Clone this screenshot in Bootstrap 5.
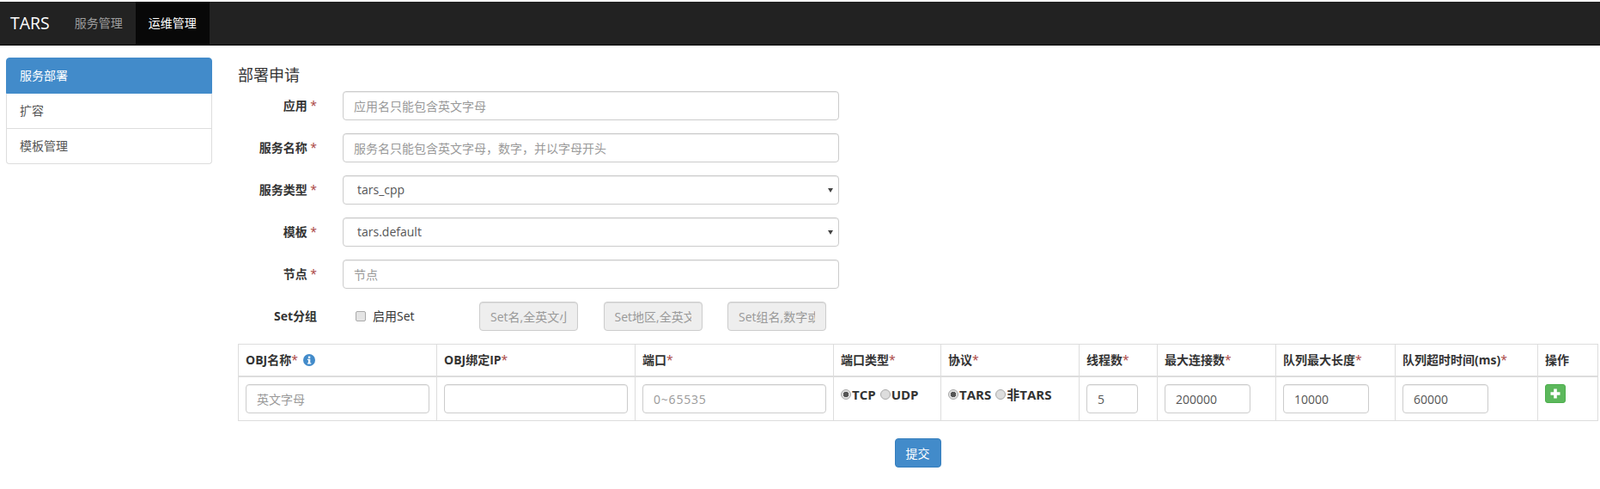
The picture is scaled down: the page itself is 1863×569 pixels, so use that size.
<!DOCTYPE html>
<html lang="zh-CN">
<head>
  <meta charset="UTF-8">
  <meta name="viewport" content="width=device-width, initial-scale=1.0">
  <title>TARS - 部署申请</title>
  <link href="https://cdn.jsdelivr.net/npm/bootstrap@5.3.0/dist/css/bootstrap.min.css" rel="stylesheet">
  <style>
    body {
      padding-top: 2px;
      font-family: "Open Sans", "Noto Sans CJK SC", sans-serif;
      font-size: 14px;
      line-height: 20px;
      color: #333;
    }
    .tars-nav {
      height: 51px;
      padding: 0;
      background: #222;
      border-bottom: 1px solid #080808;
    }
    .tars-nav .navbar-brand {
      margin: 0 14px 0 12px;
      padding: 0;
      font-size: 19.5px;
      line-height: 50px;
      color: #fff;
    }
    .tars-nav.navbar-expand .navbar-nav .nav-link {
      padding: 0 15px;
      line-height: 50px;
      color: #9d9d9d;
    }
    .tars-nav.navbar-expand .navbar-nav .nav-link.active {
      background: #080808;
      color: #fff;
    }
    .side-menu {
      flex: 0 0 240px;
      margin: 14px 0 0 7px;
      align-self: flex-start;
      border-radius: 4px;
    }
    .side-menu .list-group-item {
      padding: 10px 15px;
      font-size: 14px;
      line-height: 20px;
      color: #555;
      border-color: #ddd;
    }
    .side-menu .list-group-item.active {
      background: #428bca;
      border-color: #428bca;
      color: #fff;
    }
    .main-area {
      width: 1583px;
      margin-left: 30px;
      padding-top: 24px;
    }
    .apply-title {
      margin: 0 0 9px;
      font-size: 18px;
      line-height: 20px;
      font-weight: 400;
    }
    .deploy-row {
      display: flex;
      align-items: center;
      margin-bottom: 15px;
    }
    .deploy-label {
      flex: 0 0 92px;
      margin: 0 30px 0 0;
      text-align: right;
      font-weight: 700;
    }
    .req {
      color: #a94442;
      font-weight: 400;
    }
    .field-w {
      width: 578px;
    }
    .form-control,
    .form-select {
      height: 34px;
      padding: 6px 12px;
      font-size: 14px;
      line-height: 20px;
      color: #555;
      border-color: #ccc;
      border-radius: 4px;
      box-shadow: inset 0 1px 1px rgba(0, 0, 0, .075);
    }
    .form-control::placeholder {
      color: #999;
    }
    .form-control:disabled {
      background: #eee;
      opacity: 1;
    }
    .port-input::placeholder {
      letter-spacing: .8px;
    }
    .form-select {
      padding-left: 16px;
      background-image: url("data:image/svg+xml,%3Csvg xmlns='http://www.w3.org/2000/svg' viewBox='0 0 6 6'%3E%3Cpath fill='%23444' d='M0 1h6L3 6z'/%3E%3C/svg%3E");
      background-position: right 6px center;
      background-size: 6px 6px;
    }
    .set-check {
      display: flex;
      align-items: center;
      flex: 0 0 159px;
      padding-left: 15px;
      margin: 0;
    }
    .set-check .form-check-input {
      width: 12px;
      height: 12px;
      margin: 0 8px 0 0;
      background-color: #e4e4e4;
      border-color: #aaa;
      border-radius: 2px;
      float: none;
    }
    .set-input {
      flex: 0 0 115px;
      width: 115px;
      margin-right: 29.5px;
    }
    .obj-table {
      width: 1583px;
      margin: 0 0 20px;
      table-layout: fixed;
      color: #333;
      --bs-table-color: #333;
      --bs-border-color: #ddd;
      --bs-table-border-color: #ddd;
    }
    .obj-table th,
    .obj-table td {
      padding: 8px;
      line-height: 20px;
      vertical-align: top;
      border: 1px solid #ddd;
    }
    .obj-table thead th {
      border-bottom: 2px solid #ddd;
    }
    .obj-table th:nth-child(1),
    .obj-table th:nth-child(2),
    .obj-table th:nth-child(3) { width: 231px; }
    .obj-table th:nth-child(4) { width: 125px; }
    .obj-table th:nth-child(5) { width: 161px; }
    .obj-table th:nth-child(6) { width: 91px; }
    .obj-table th:nth-child(7) { width: 138px; }
    .obj-table th:nth-child(8) { width: 139px; }
    .obj-table th:nth-child(9) { width: 166px; }
    .obj-table th:nth-child(10) { width: 70px; }
    .w-60 { width: 60px; }
    .w-100px { width: 100px; }
    .info-mark {
      display: inline-block;
      width: 14px;
      height: 14px;
      margin-left: 2px;
      vertical-align: -2px;
    }
    .radio-line {
      display: flex;
      align-items: center;
      height: 20px;
      margin-top: 2px;
      font-size: 15px;
      font-weight: 700;
      white-space: nowrap;
    }
    .radio-dot {
      flex: 0 0 12px;
      width: 12px;
      height: 12px;
      margin-right: 1px;
      background: #ddd;
      border: 1px solid #aaa;
      border-radius: 50%;
    }
    .radio-dot.on {
      background: radial-gradient(circle, #555 0 3px, #ddd 3.5px);
    }
    .radio-text {
      margin-right: 5px;
    }
    .add-btn {
      display: flex;
      align-items: center;
      justify-content: center;
      width: 24px;
      height: 22px;
      padding: 0;
      background: #5cb85c;
      border-color: #4cae4c;
      border-radius: 3px;
    }
    .submit-btn {
      width: 54px;
      height: 34px;
      padding: 0;
      font-size: 14px;
      background: #428bca;
      border-color: #357ebd;
      border-radius: 4px;
    }
  </style>
</head>

<body>

  <!-- 顶部导航 -->
  <nav class="navbar navbar-expand navbar-dark tars-nav">
    <a class="navbar-brand" href="#">TARS</a>
    <ul class="navbar-nav">
      <li class="nav-item"><a class="nav-link" href="#">服务管理</a></li>
      <li class="nav-item"><a class="nav-link active" href="#">运维管理</a></li>
    </ul>
  </nav>

  <div class="d-flex">
    <!-- 左侧菜单 -->
    <div class="list-group side-menu">
      <a href="#" class="list-group-item list-group-item-action active">服务部署</a>
      <a href="#" class="list-group-item list-group-item-action">扩容</a>
      <a href="#" class="list-group-item list-group-item-action">模板管理</a>
    </div>

    <div class="main-area">
      <h4 class="apply-title">部署申请</h4>

      <div class="deploy-row">
        <label class="deploy-label">应用 <span class="req">*</span></label>
        <input type="text" class="form-control field-w" placeholder="应用名只能包含英文字母">
      </div>
      <div class="deploy-row">
        <label class="deploy-label">服务名称 <span class="req">*</span></label>
        <input type="text" class="form-control field-w" placeholder="服务名只能包含英文字母，数字，并以字母开头">
      </div>
      <div class="deploy-row">
        <label class="deploy-label">服务类型 <span class="req">*</span></label>
        <select class="form-select field-w">
          <option>tars_cpp</option>
        </select>
      </div>
      <div class="deploy-row">
        <label class="deploy-label">模板 <span class="req">*</span></label>
        <select class="form-select field-w">
          <option>tars.default</option>
        </select>
      </div>
      <div class="deploy-row">
        <label class="deploy-label">节点 <span class="req">*</span></label>
        <input type="text" class="form-control field-w" placeholder="节点">
      </div>
      <div class="deploy-row">
        <label class="deploy-label">Set分组</label>
        <label class="set-check">
          <input type="checkbox" class="form-check-input">
          启用Set
        </label>
        <input type="text" class="form-control set-input" placeholder="Set名,全英文小写" disabled>
        <input type="text" class="form-control set-input" placeholder="Set地区,全英文小写" disabled>
        <input type="text" class="form-control set-input" placeholder="Set组名,数字或*" disabled>
      </div>

      <table class="table table-bordered obj-table">
        <thead>
          <tr>
            <th>OBJ名称<span class="req">*</span>
              <svg class="info-mark" viewBox="0 0 14 14"><circle cx="7" cy="7" r="7" fill="#428bca"/><rect x="5.9" y="2.6" width="2.4" height="2.2" fill="#fff"/><path fill="#fff" d="M4.9 5.8h3.4v4.4h1v1.3H4.9v-1.3h1V7.1h-1z"/></svg>
            </th>
            <th>OBJ绑定IP<span class="req">*</span></th>
            <th>端口<span class="req">*</span></th>
            <th>端口类型<span class="req">*</span></th>
            <th>协议<span class="req">*</span></th>
            <th>线程数<span class="req">*</span></th>
            <th>最大连接数<span class="req">*</span></th>
            <th>队列最大长度<span class="req">*</span></th>
            <th>队列超时时间(ms)<span class="req">*</span></th>
            <th>操作</th>
          </tr>
        </thead>
        <tbody>
          <tr>
            <td><input type="text" class="form-control" placeholder="英文字母"></td>
            <td><input type="text" class="form-control"></td>
            <td><input type="text" class="form-control port-input" placeholder="0~65535"></td>
            <td>
              <div class="radio-line">
                <span class="radio-dot on"></span><span class="radio-text">TCP</span>
                <span class="radio-dot"></span><span class="radio-text">UDP</span>
              </div>
            </td>
            <td>
              <div class="radio-line">
                <span class="radio-dot on"></span><span class="radio-text">TARS</span>
                <span class="radio-dot"></span><span class="radio-text">非TARS</span>
              </div>
            </td>
            <td><input type="text" class="form-control w-60" value="5"></td>
            <td><input type="text" class="form-control w-100px" value="200000"></td>
            <td><input type="text" class="form-control w-100px" value="10000"></td>
            <td><input type="text" class="form-control w-100px" value="60000"></td>
            <td>
              <button type="button" class="btn btn-success add-btn" aria-label="添加">
                <svg width="12" height="12" viewBox="0 0 12 12"><path fill="#fff" d="M4.2 0.5h3.6v3.7h3.7v3.6H7.800v3.7H4.200V7.800H0.500V4.200h3.700z"/></svg>
              </button>
            </td>
          </tr>
        </tbody>
      </table>

      <div class="text-center">
        <button type="button" class="btn btn-primary submit-btn">提交</button>
      </div>
    </div>
  </div>

  <script src="https://cdn.jsdelivr.net/npm/bootstrap@5.3.0/dist/js/bootstrap.bundle.min.js"></script>
</body>
</html>
